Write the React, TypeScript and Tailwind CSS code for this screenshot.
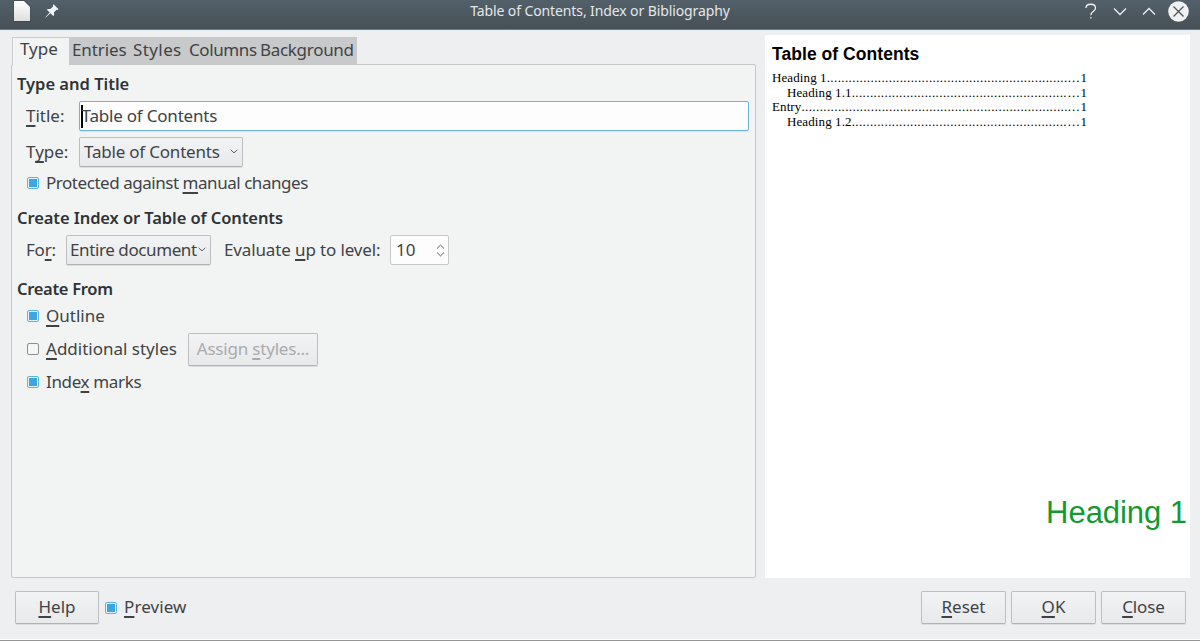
import React from "react";

const K = ({ children }: { children: React.ReactNode }) => (
  <span className="underline decoration-[1.5px] underline-offset-[3px] [text-decoration-skip-ink:none]">{children}</span>
);

const Check = ({ on = false }: { on?: boolean }) => (
  <span
    className={
      "flex h-3 w-3 shrink-0 items-center justify-center rounded-[2px] border " +
      (on ? "border-[#5fb4e4] bg-[#e9f4fa]" : "mb-px border-[#8b8f92] bg-[#f4f5f5]")
    }
  >
    {on && <span className="h-2 w-2 bg-[#3ba7e0]" />}
  </span>
);

const Chevron = () => (
  <svg className="shrink-0" width="8" height="5" viewBox="0 0 8 5" fill="none" stroke="#5b6064">
    <path d="M.7.8 4 3.9 7.3.8" />
  </svg>
);

const Button = ({ className, children }: { className: string; children: React.ReactNode }) => (
  <button
    className={
      "flex shrink-0 items-center whitespace-nowrap rounded-[2px] border border-[#bcbec0] border-b-[#b0b2b4] bg-gradient-to-b from-[#f2f3f4] to-[#e8e9eb] shadow-[0_1px_0_#dcdddf] " +
      className
    }
  >
    {children}
  </button>
);

const Leader = ({ label, indent = false, dots }: { label: string; indent?: boolean; dots: number }) => (
  <div className={"flex h-[14.6px] w-[315px] items-center whitespace-nowrap " + (indent ? "pl-[15px]" : "")}>
    <span className="shrink-0 tracking-[0.1px]">{label}</span>
    <span className="shrink-0 tracking-[0.4px]">{".".repeat(dots)}</span>
    <span className="ml-auto shrink-0 tracking-[1px]">...</span>
    <span className="shrink-0">1</span>
  </div>
);

export default function App() {
  return (
    <div className="flex h-[641px] w-[1200px] flex-col overflow-hidden bg-[#eeeff1] font-['Noto_Sans','Open_Sans',sans-serif] text-[17px] leading-5 text-[#3f4346]">
      <header className="flex h-[31px] shrink-0 items-start border-b border-[#e3edf5] bg-gradient-to-b from-[#53606a] to-[#464f54] shadow-[inset_0_-1px_0_#4687b5]">
        <div className="flex w-[400px] items-start pl-[13px]">
          <svg width="18" height="22" viewBox="0 0 18 22">
            <defs>
              <linearGradient id="page" x1="0" y1="0" x2="0" y2="1">
                <stop offset="0" stopColor="#fff" />
                <stop offset="1" stopColor="#dedede" />
              </linearGradient>
            </defs>
            <path d="M.5 0h11L17.5 6.500V22H.5Z" fill="#343b40" opacity=".45" />
            <path d="M1 1h10l6 6v14H1Z" fill="url(#page)" />
          </svg>
          <svg className="ml-[14px] mt-1" width="14" height="14" viewBox="0 0 14 14">
            <path d="M8.500.3 13.600 5.300 12.300 6 11.500 5.800 8.900 8.600 9.200 11.100 8.300 12 5.400 9.200.7 13.500.3 13.200 4.700 8.500 1.900 5.700 2.700 4.900 5.300 5.100 8.100 2.400 7.900 1.300Z" fill="#f3f5f6" />
          </svg>
        </div>
        <div className="h-6 w-[400px] whitespace-nowrap text-center text-[14px] leading-[22px] tracking-[-0.11px] text-[#e4e7e9]">
          Table of Contents, Index or Bibliography
        </div>
        <div className="flex w-[400px] justify-end pr-[11px]">
          <svg width="105" height="24" viewBox="0 0 105 24" fill="none" stroke="#eef0f1" strokeWidth="1.3">
            <path d="M2 8c0-5 9.500-5 9.500 0 0 4-4.700 3-4.700 7.300" />
            <path d="M6.100 17.800h1.500" />
            <path d="m30 8.500 6 6 6-6M59 14.500l6-6 6 6" />
            <circle cx="94.500" cy="11.500" r="10.300" fill="#f0f1f2" stroke="none" />
            <path d="m89.500 6.500 10 10m0-10-10 10" stroke="#4c565d" />
          </svg>
        </div>
      </header>

      <main className="flex h-[547px] shrink-0">
        <section className="flex w-[765px] flex-col pl-[11px] pt-[6px]">
          <nav className="flex h-[27px] shrink-0 pl-px">
            <div className="relative z-10 -mb-px flex w-[57px] items-center border-l border-t border-[#c9cbcc] bg-[#f2f4f3] pb-[5px] pl-[7px]">Type</div>
            <div className="flex w-[288px] items-center whitespace-nowrap bg-[#c8c9cb] pb-[2px] pl-[3px]">
              <span className="w-[61px] tracking-[-0.1px]">Entries</span>
              <span className="w-[56px] tracking-[0.4px]">Styles</span>
              <span className="w-[71px] tracking-[-0.4px]">Columns</span>
              <span className="tracking-[-0.3px]">Background</span>
            </div>
          </nav>
          <div className="flex h-[514px] w-[745px] shrink-0 flex-col rounded-[2px] border border-[#c6c8c9] bg-[#f2f4f3] pl-[5px] pt-[9px]">
            <h2 className="h-5 shrink-0 text-[16.500px] font-semibold text-[#2f3336]">Type and Title</h2>
            <div className="mt-[7px] flex h-[30px] shrink-0 items-center pl-[9px]">
              <label className="w-[53px] shrink-0"><K>T</K>itle:</label>
              <div className="flex h-[30px] w-[670px] items-center rounded-[2px] border border-[#6db3dc] bg-[#fcfdfc] pl-px shadow-[0_1px_0_#cfe9f6]">
                <span className="-mr-px h-[23px] w-[1.500px] bg-black" />
                <span className="pb-px tracking-[-0.2px]">Table of Contents</span>
              </div>
            </div>
            <div className="mt-[6px] flex h-[30px] shrink-0 items-center pl-[9px]">
              <label className="w-[53px] shrink-0">T<K>y</K>pe:</label>
              <Button className="h-[30px] w-[164px] justify-between pb-px pl-[4px] pr-[4px]">
                <span className="tracking-[-0.2px]">Table of Contents</span>
                <Chevron />
              </Button>
            </div>
            <div className="mt-[6px] flex h-5 shrink-0 items-center gap-[7px] pl-[10px]">
              <Check on />
              <span className="tracking-[-0.46px]">Protected against <K>m</K>anual changes</span>
            </div>
            <h2 className="mt-[15px] h-5 shrink-0 text-[16.500px] font-semibold tracking-[-0.09px] text-[#2f3336]">Create Index or Table of Contents</h2>
            <div className="mt-[7px] flex h-[30px] shrink-0 items-center pl-[9px]">
              <label className="w-10 shrink-0 pb-px tracking-[-0.2px]">Fo<K>r</K>:</label>
              <Button className="h-[30px] w-[145px] justify-between pb-px pl-[3px] pr-[4px]">
                <span className="tracking-[-0.4px]">Entire document</span>
                <Chevron />
              </Button>
              <label className="ml-[13px] w-[166px] shrink-0 whitespace-nowrap pb-px tracking-[-0.13px]">Evaluate <K>u</K>p to level:</label>
              <div className="flex h-[30px] w-[59px] items-center justify-between rounded-[2px] border border-[#c6c8c9] bg-[#fcfdfc] pl-[5px] pr-[3px]">
                <span className="pb-px">10</span>
                <svg width="9" height="13" viewBox="0 0 9 13" fill="none" stroke="#5b6064">
                  <path d="m1 4.500 3.500-3.400L8 4.500M1 8.500l3.500 3.400L8 8.500" />
                </svg>
              </div>
            </div>
            <h2 className="mt-[14px] h-5 shrink-0 text-[16.500px] font-semibold tracking-[-0.3px] text-[#2f3336]">Create From</h2>
            <div className="mt-[7px] flex h-5 shrink-0 items-center gap-[7px] pl-[10px]">
              <Check on />
              <span><K>O</K>utline</span>
            </div>
            <div className="mt-[7px] flex h-[33px] shrink-0 items-center gap-[7px] pl-[10px]">
              <Check />
              <span className="w-[135px] whitespace-nowrap pb-px"><K>A</K>dditional styles</span>
              <Button className="h-[33px] w-[130px] justify-center pb-[2px] text-[#a9abad]">
                <span className="tracking-[-0.2px]">Assign <K>s</K>tyles...</span>
              </Button>
            </div>
            <div className="mt-[6px] flex h-5 shrink-0 items-center gap-[7px] pl-[10px]">
              <Check on />
              <span className="tracking-[-0.35px]">Inde<K>x</K> marks</span>
            </div>
          </div>
        </section>

        <section className="mt-1 flex h-[543px] w-[425px] flex-col justify-between bg-white pl-[7px] pt-[9px] text-black">
          <div>
            <h1 className="h-5 font-['Liberation_Sans',sans-serif] text-[17.500px] font-bold tracking-[0.05px]">Table of Contents</h1>
            <div className="mt-[7px] font-['Liberation_Serif',serif] text-[13px]">
              <Leader label="Heading 1" dots={66} />
              <Leader label="Heading 1.1" indent dots={59} />
              <Leader label="Entry" dots={73} />
              <Leader label="Heading 1.2" indent dots={59} />
            </div>
          </div>
          <div className="pb-[47px] pr-[3px] text-right font-['Liberation_Sans',sans-serif] text-[31px] leading-9 tracking-[-0.05px] text-[#129a2f]">Heading 1</div>
        </section>
      </main>

      <footer className="flex h-[61px] shrink-0 items-start pl-[15px] pr-[14px] pt-[13px]">
        <Button className="h-[33px] w-[84px] justify-center pb-[2px]"><span><K>H</K>elp</span></Button>
        <div className="ml-[6px] flex h-[33px] items-center gap-[7px]">
          <Check on />
          <span className="pb-px tracking-[0.1px]"><K>P</K>review</span>
        </div>
        <div className="ml-auto flex gap-[5px]">
          <Button className="h-[33px] w-[85px] justify-center pb-[2px]"><span><K>R</K>eset</span></Button>
          <Button className="h-[33px] w-[85px] justify-center pb-[2px]"><span><K>O</K>K</span></Button>
          <Button className="h-[33px] w-[85px] justify-center pb-[2px]"><span className="tracking-[-0.1px]"><K>C</K>lose</span></Button>
        </div>
      </footer>
      <div className="h-[2px] shrink-0 border-t border-white bg-[#939495]" />
    </div>
  );
}
